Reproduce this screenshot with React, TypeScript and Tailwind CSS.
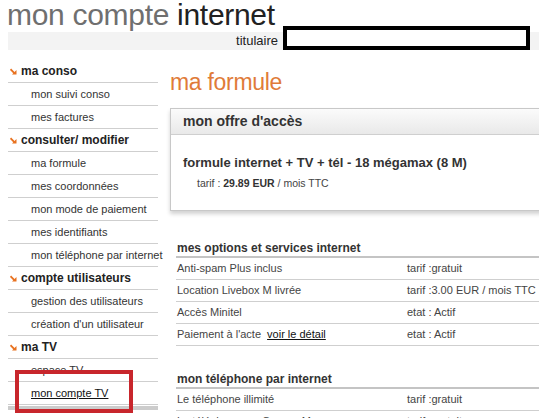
import { ReactNode } from 'react';

type NavItem = { label: string; header?: boolean; link?: boolean };

const nav: NavItem[] = [
  { label: 'ma conso', header: true },
  { label: 'mon suivi conso' },
  { label: 'mes factures' },
  { label: 'consulter/ modifier', header: true },
  { label: 'ma formule' },
  { label: 'mes coordonnées' },
  { label: 'mon mode de paiement' },
  { label: 'mes identifiants' },
  { label: 'mon téléphone par internet' },
  { label: 'compte utilisateurs', header: true },
  { label: 'gestion des utilisateurs' },
  { label: "création d'un utilisateur" },
  { label: 'ma TV', header: true },
  { label: 'espace TV' },
  { label: 'mon compte TV', link: true },
];

function Arrow() {
  return (
    <svg width="7" height="7" viewBox="0 0 7 7" className="mr-[4px] shrink-0">
      <path d="M0.5 1.2 L4.6 5.3" stroke="#e8711f" strokeWidth="1.8" />
      <path d="M6.5 2 L6.5 6.5 L2 6.5 Z" fill="#e8711f" />
    </svg>
  );
}

function Row({ left, right }: { left: ReactNode; right: string }) {
  return (
    <div className="flex h-[22px] items-center border-b border-[#cfcfcf] pl-[1px] text-[11px] text-[#444]">
      <div className="w-[230px] shrink-0">{left}</div>
      <div className="whitespace-nowrap">{right}</div>
    </div>
  );
}

function Section({ title, children }: { title: string; children: ReactNode }) {
  return (
    <div className="ml-[6px]">
      <div className="flex h-[18px] items-center border-b-2 border-[#c4c4c4] pl-[1px] text-[12px] font-bold text-[#333]">
        {title}
      </div>
      {children}
    </div>
  );
}

export default function App() {
  return (
    <div className="relative h-[418px] w-[539px] overflow-hidden bg-white font-['Liberation_Sans',Arial,sans-serif]">
      <div className="h-[30px] whitespace-nowrap pl-[7px] text-[30px] leading-[30px] tracking-[-0.3px]">
        <span className="text-[#6f6f6f]">mon compte </span>
        <span className="text-[#222]">internet</span>
      </div>

      <div className="-mt-[4px] flex h-[24px] items-end pl-[8px]">
        <div className="flex h-[18px] flex-1 items-center justify-end bg-[#f3f3f3] pr-[5px] text-[13px] text-[#222]">
          titulaire
        </div>
        <div className="h-[24px] w-[247px] shrink-0 border-4 border-black bg-white" />
        <div className="h-[18px] w-[9px] shrink-0 bg-[#f3f3f3]" />
      </div>

      <div className="mt-[10px] flex">
        <div className="ml-[8px] w-[150px] shrink-0">
          {nav.map(item => (
            <div
              key={item.label}
              className={
                item.header
                  ? 'flex h-[23px] items-center whitespace-nowrap border-b border-[#cfcfcf] pl-[2px] text-[12px] font-bold text-[#222]'
                  : 'flex h-[23px] items-center whitespace-nowrap border-b border-[#cfcfcf] pl-[23px] text-[11px] text-[#333]'
              }
            >
              {item.header && <Arrow />}
              <span className={item.link ? 'text-[#111] underline' : ''}>{item.label}</span>
            </div>
          ))}
          <div className="mt-[1px] h-[4px] bg-[#cccccc]" />
        </div>

        <div className="ml-[12px] min-w-0 flex-1">
          <h1 className="mt-[8px] text-[23px] leading-[28px] tracking-[-0.3px] text-[#e07b39]">ma formule</h1>

          <div className="mt-[12px] w-[380px] border border-[#c8c8c8] bg-white shadow-[0_3px_4px_rgba(0,0,0,0.18)]">
            <div className="flex h-[26px] items-center border-b border-[#cfcfcf] bg-gradient-to-b from-[#fbfbfb] to-[#e9e9e9] pl-[12px] text-[14px] font-bold text-[#333]">
              mon offre d'accès
            </div>
            <div className="pb-[21px] pl-[12px] pt-[20px]">
              <div className="text-[13px] font-bold leading-[16px] text-[#333]">
                formule internet + TV + tél - 18 mégamax (8 M)
              </div>
              <div className="mt-[6px] pl-[14px] text-[10.5px] leading-[12px] text-[#444]">
                tarif : <b className="text-[#333]">29.89 EUR</b> / mois TTC
              </div>
            </div>
          </div>

          <div className="mt-[29px] w-[375px]">
            <Section title="mes options et services internet">
              <Row left="Anti-spam Plus inclus" right="tarif :gratuit" />
              <Row left="Location Livebox M livrée" right="tarif :3.00 EUR / mois TTC" />
              <Row left="Accès Minitel" right="etat : Actif" />
              <Row
                left={
                  <span>
                    Paiement à l'acte <span className="ml-[3px] text-[#111] underline">voir le détail</span>
                  </span>
                }
                right="etat : Actif"
              />
            </Section>
          </div>

          <div className="mt-[25px] w-[375px]">
            <Section title="mon téléphone par internet">
              <Row left="Le téléphone illimité" right="tarif :gratuit" />
              <Row left="Le téléphone sur Orange Messenger" right="tarif :gratuit" />
            </Section>
          </div>
        </div>
      </div>

      <div className="absolute left-[15px] top-[370px] h-[43px] w-[118px] border-4 border-[#c8262c]" />
    </div>
  );
}
